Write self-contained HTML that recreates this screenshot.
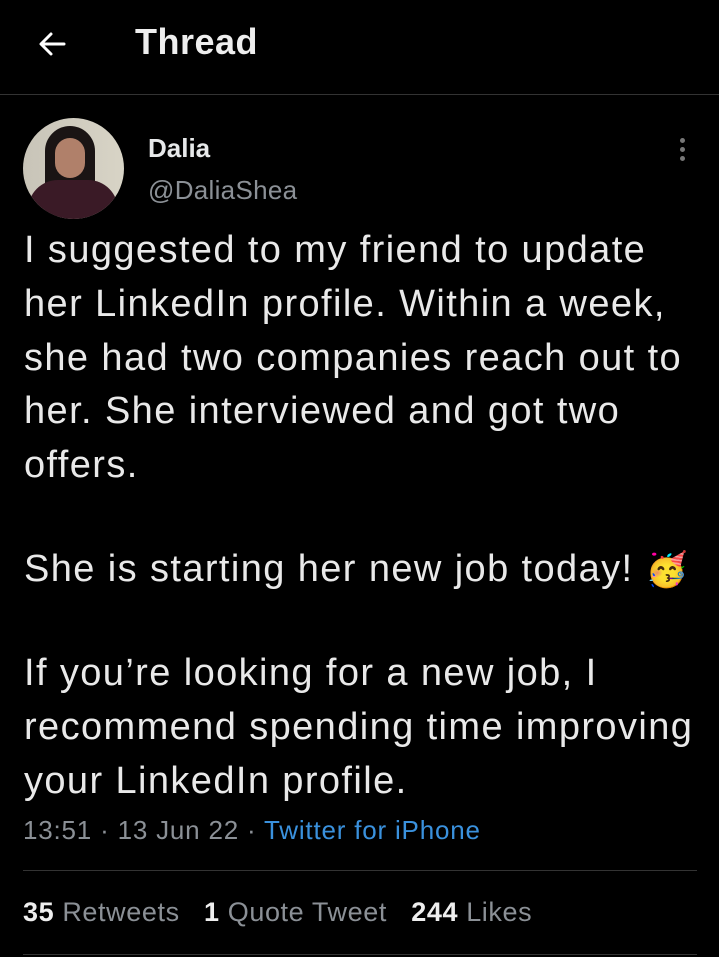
<!DOCTYPE html>
<html><head><meta charset="utf-8"><style>
html,body{margin:0;padding:0;background:#000;width:719px;height:957px;overflow:hidden;font-family:"Liberation Sans",sans-serif;color:#e7e9ea}
.abs{position:absolute}
.line{position:absolute;left:0;width:719px;height:1px;background:#333}
.t{position:absolute;left:24px;font-size:38px;letter-spacing:1.4px;line-height:54px;white-space:nowrap;color:#e9e9e9}
</style></head><body>
<svg class="abs" style="left:36px;top:28px" width="32" height="32" viewBox="0 0 32 32"><path d="M28 16H6M15 6L5 16l10 10" stroke="#fff" stroke-width="3" fill="none" stroke-linecap="round" stroke-linejoin="round"/></svg>
<div class="abs" style="left:135px;top:21px;font-size:36px;font-weight:bold;color:#eee;letter-spacing:0.5px">Thread</div>
<div class="line" style="top:94px"></div>
<div class="abs" style="left:23px;top:118px;width:101px;height:101px;border-radius:50%;background:linear-gradient(90deg,#c8c4b8 0%,#d8d4c6 100%);overflow:hidden">
 <div class="abs" style="left:22px;top:8px;width:50px;height:90px;background:#1a1414;border-radius:25px 25px 5px 5px"></div>
 <div class="abs" style="left:32px;top:20px;width:30px;height:40px;background:#b0806a;border-radius:15px"></div>
 <div class="abs" style="left:5px;top:62px;width:90px;height:50px;background:#3a1a26;border-radius:30px 30px 0 0"></div>
</div>
<div class="abs" style="left:148px;top:133px;font-size:26px;font-weight:bold;color:#e7e9ea">Dalia</div>
<div class="abs" style="left:148px;top:175px;font-size:26px;color:#8b9096;letter-spacing:0.3px">@DaliaShea</div>
<div class="abs" style="left:680px;top:138px;width:5px;height:24px">
 <div class="abs" style="top:0;width:5px;height:5px;border-radius:50%;background:#777"></div>
 <div class="abs" style="top:9px;width:5px;height:5px;border-radius:50%;background:#777"></div>
 <div class="abs" style="top:18px;width:5px;height:5px;border-radius:50%;background:#777"></div>
</div>
<div class="t" style="top:223px">I suggested to my friend to update</div>
<div class="t" style="top:277px">her LinkedIn profile. Within a week,</div>
<div class="t" style="top:331px">she had two companies reach out to</div>
<div class="t" style="top:384px">her. She interviewed and got two</div>
<div class="t" style="top:438px">offers.</div>
<div class="t" style="top:542px">She is starting her new job today! <span style="font-size:34px">🥳</span></div>
<div class="t" style="top:646px">If you’re looking for a new job, I</div>
<div class="t" style="top:700px">recommend spending time improving</div>
<div class="t" style="top:754px">your LinkedIn profile.</div>
<div class="abs" style="left:23px;top:815px;font-size:26px;letter-spacing:0.8px;color:#8b9096">13:51 · 13 Jun 22 · <span style="color:#3a91dd">Twitter for iPhone</span></div>
<div class="line" style="left:23px;width:674px;top:870px"></div>
<div class="abs" style="left:23px;top:897px;font-size:27px;letter-spacing:0.6px;color:#8b9096"><b style="color:#eee">35</b> Retweets&nbsp;&nbsp; <b style="color:#eee">1</b> Quote Tweet&nbsp;&nbsp; <b style="color:#eee">244</b> Likes</div>
<div class="line" style="left:23px;width:674px;top:954px"></div>
</body></html>
